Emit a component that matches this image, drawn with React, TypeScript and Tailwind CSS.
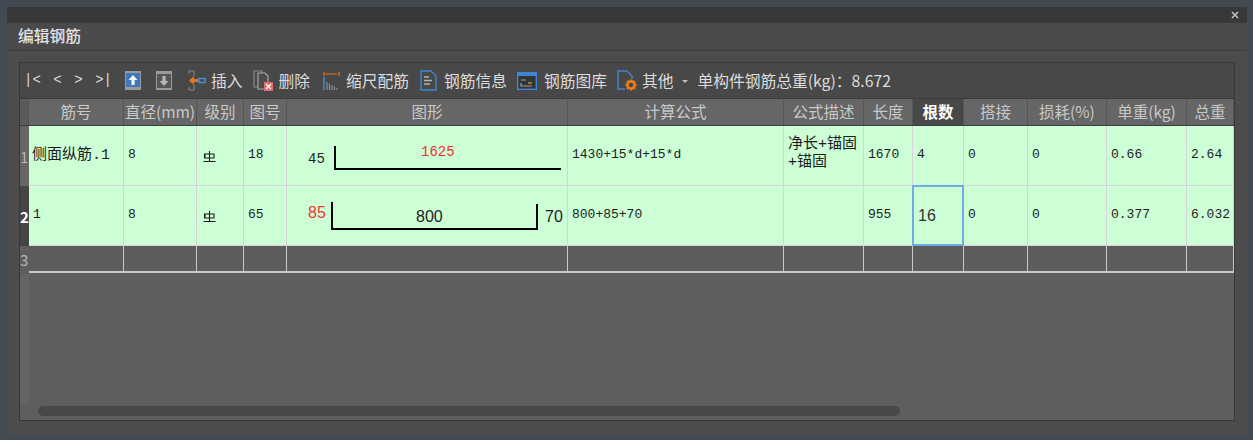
const UI_FONT = "font-['Noto_Sans_CJK_SC','Noto_Sans',sans-serif]";
const CELL_FONT = "font-['Liberation_Mono','Noto_Sans_CJK_SC',monospace]";
const LABEL_FONT = "Liberation Sans, sans-serif";

const columns = [
  { title: "筋号" },
  { title: "直径(mm)" },
  { title: "级别" },
  { title: "图号" },
  { title: "图形" },
  { title: "计算公式" },
  { title: "公式描述" },
  { title: "长度" },
  { title: "根数", active: true },
  { title: "搭接" },
  { title: "损耗(%)" },
  { title: "单重(kg)" },
  { title: "总重" },
];

const GRID =
  "grid grid-cols-[9px_95px_73px_47px_43px_281px_216px_80px_49px_51px_64px_79px_80px_47px]";

function GradeMark() {
  return (
    <svg width="13" height="12" viewBox="0 0 13 12" className="mt-[3px]">
      <path d="M2 3H11V7H2ZM1.5 2.5V7.5M6.5 0V10.5M0.5 10.5H12.5" fill="none" stroke="#1a1a1a" strokeWidth="1.1" />
    </svg>
  );
}

function UpIcon() {
  return (
    <svg width="16" height="19" viewBox="0 0 16 19">
      <rect width="16" height="19" fill="#9a9a9a" />
      <rect x="1" y="2" width="14" height="14" fill="#3f78b8" />
      <path d="M8 4L12.5 9H9.6V14H6.4V9H3.5Z" fill="#f2f6fa" />
    </svg>
  );
}

function DownIcon() {
  return (
    <svg width="16" height="19" viewBox="0 0 16 19">
      <rect width="16" height="19" fill="#9a9a9a" />
      <rect x="1" y="3" width="14" height="14" fill="#555555" />
      <path d="M8 15L3.5 10H6.4V5H9.6V10H12.5Z" fill="#b8b8b8" />
    </svg>
  );
}

function InsertIcon() {
  return (
    <svg width="18" height="21" viewBox="0 0 18 21">
      <path d="M1 1H6M1 1V4M6 6V1M1 20H6M1 20V17M6 20V15" fill="none" stroke="#8a8a8a" strokeWidth="1" />
      <path d="M6 6L1 10.5L6 15V12H10V9H6Z" fill="#e8751a" />
      <rect x="11" y="8.5" width="6" height="4" fill="none" stroke="#4a90d9" strokeWidth="1.4" />
    </svg>
  );
}

function DeleteIcon() {
  return (
    <svg width="20" height="21" viewBox="0 0 20 21">
      <path d="M1 1H9V17H1Z" fill="none" stroke="#8a8a8a" strokeWidth="1.2" />
      <path d="M5 3H12L15 6V19H5Z" fill="#4c4c4c" stroke="#a8a8a8" strokeWidth="1.2" />
      <rect x="11" y="12" width="9" height="9" fill="#e66a6a" />
      <path d="M13 14L18 19M18 14L13 19" stroke="#fff" strokeWidth="1.2" />
    </svg>
  );
}

function ScaleIcon() {
  return (
    <svg width="17" height="20" viewBox="0 0 17 20">
      <path d="M1 1V5M16 1V5M2 3H14" fill="none" stroke="#e8751a" strokeWidth="1.2" />
      <path d="M1 6V19" stroke="#4a90d9" strokeWidth="1.4" />
      <path d="M4 19V11M6.5 19V12.5M9 19V14M11.5 19V15.5M14 19V17" stroke="#8f8f8f" strokeWidth="1.2" />
    </svg>
  );
}

function InfoIcon() {
  return (
    <svg width="17" height="21" viewBox="0 0 17 21">
      <path d="M1 1H11L16 6V20H1Z" fill="none" stroke="#3f86d0" strokeWidth="1.4" />
      <path d="M4 7H9M4 10.5H12M4 14H10" stroke="#b5b5b5" strokeWidth="1.4" />
    </svg>
  );
}

function LibraryIcon() {
  return (
    <svg width="20" height="18" viewBox="0 0 20 18">
      <rect x="0.7" y="0.7" width="18.6" height="16.6" fill="#333" stroke="#3f86d0" strokeWidth="1.4" />
      <rect x="1" y="1" width="18" height="3" fill="#3f86d0" />
      <path d="M4 8H9M4 11V14H15" fill="none" stroke="#a0a0a0" strokeWidth="1.2" />
      <path d="M11 11H15" stroke="#d8a13a" strokeWidth="1.2" />
    </svg>
  );
}

function OtherIcon() {
  return (
    <svg width="20" height="21" viewBox="0 0 20 21">
      <path d="M8 19H1V1H10L15 6V9" fill="none" stroke="#3f86d0" strokeWidth="1.4" />
      <circle cx="14" cy="15" r="3.6" fill="none" stroke="#ee7a1c" strokeWidth="2.6" />
      <path d="M14 9.5V11M14 19V20.5M8.5 15H10M18 15H19.5M10 11L11 12M17 18L18 19M18 11L17 12M11 18L10 19" stroke="#ee7a1c" strokeWidth="1.8" />
    </svg>
  );
}

function ToolItem({ icon, label, className }: { icon: React.ReactNode; label: string; className: string }) {
  return (
    <div className={`flex items-center ${className}`}>
      {icon}
      <span>{label}</span>
    </div>
  );
}

function Cell({ children, className = "pb-[2px] pl-1 text-[13px]" }: { children?: React.ReactNode; className?: string }) {
  return (
    <div className={`flex items-center border-r border-b border-[#d8d3d8] text-[#1c1c1c] ${className}`}>
      {children}
    </div>
  );
}

function RowHead({ n, className }: { n: number; className: string }) {
  return <div className={`flex items-center text-[15px] leading-none ${UI_FONT} ${className}`}>{n}</div>;
}

export default function App() {
  const emptyCells = Array.from({ length: 13 });

  return (
    <div className="h-[440px] w-[1253px] overflow-hidden bg-[#434a54] pt-[7px] pl-[7px]">
      <div className={`h-[427px] w-[1240px] bg-[#4c4c4c] ${UI_FONT}`}>
        <div className="flex h-[15px] items-center justify-end bg-[#383838] pr-[8px]">
          <svg width="8" height="8" viewBox="0 0 8 8">
            <path d="M1 1L7 7M7 1L1 7" stroke="#c4c4c4" strokeWidth="1.5" />
          </svg>
        </div>
        <div className="flex h-[29px] items-center border-y border-[#3a3a3a] bg-[#4a4a4a] pb-[2px] pl-[11px] text-[15.75px] font-medium text-[#e2e2e2]">
          编辑钢筋
        </div>

        <div className="mt-[11px] ml-[12px] w-[1216px] border border-[#383838] bg-[#5e5e5e]">
          <div className="flex h-[36px] items-center border-b border-[#3a3a3a] bg-[#484848] pl-[4px] text-[15.75px] whitespace-nowrap text-[#dcdcdc]">
            <div className={`flex w-[88px] justify-between text-[14px] ${CELL_FONT}`}>
              <span>|&lt;</span>
              <span>&lt;</span>
              <span>&gt;</span>
              <span>&gt;|</span>
            </div>
            <div className="ml-[13px]"><UpIcon /></div>
            <div className="ml-[15px]"><DownIcon /></div>
            <ToolItem icon={<InsertIcon />} label="插入" className="ml-[16px] gap-[5px]" />
            <ToolItem icon={<DeleteIcon />} label="删除" className="ml-[10px] gap-[6px]" />
            <ToolItem icon={<ScaleIcon />} label="缩尺配筋" className="ml-[13px] gap-[6px]" />
            <ToolItem icon={<InfoIcon />} label="钢筋信息" className="ml-[11px] gap-[7px]" />
            <ToolItem icon={<LibraryIcon />} label="钢筋图库" className="ml-[10px] gap-[7px]" />
            <ToolItem icon={<OtherIcon />} label="其他" className="ml-[10px] gap-[5px]" />
            <span className="mt-[1px] ml-[8px] h-0 w-0 border-x-[3px] border-t-[3px] border-x-transparent border-t-[#bdbdbd]" />
            <span className="ml-[10px]">单构件钢筋总重(kg)：8.672</span>
          </div>

          <div className="relative h-[321px] overflow-hidden">
            <div className={`${GRID} h-[27px] border-b border-[#3c3c3c] bg-[#666666] text-[15.5px] whitespace-nowrap text-[#c9c9c9]`}>
              <div className="border-r border-[#555555] bg-[#5a5a5a]" />
              {columns.map((col) => (
                <div
                  key={col.title}
                  className={`flex items-center justify-center overflow-hidden border-r border-[#555555] ${
                    col.active ? "bg-[#484848] font-bold text-white" : ""
                  }`}
                >
                  {col.title}
                </div>
              ))}
            </div>

            <div className={`${GRID} h-[60px] bg-[#ccffd5] ${CELL_FONT}`}>
              <RowHead n={1} className="bg-[#666666] text-[#b5b5b5]" />
              <Cell className="pt-[2px] pl-[3px] text-[15px]">侧面纵筋.1</Cell>
              <Cell>8</Cell>
              <Cell className="pl-[6px]"><GradeMark /></Cell>
              <Cell>18</Cell>
              <Cell className="pl-0">
                <svg width="280" height="59" viewBox="1 0 280 59" className="block">
                  <path d="M49 20V43H275" fill="none" stroke="#000" strokeWidth="2" />
                  <text x="22" y="37" fontSize="14" fill="#222">45</text>
                  <text x="135" y="30" fontSize="14" fill="#f53030">1625</text>
                </svg>
              </Cell>
              <Cell>1430+15*d+15*d</Cell>
              <Cell className="pb-[4px] pl-1 text-[15px] leading-[18px] break-all">净长+锚固 +锚固</Cell>
              <Cell>1670</Cell>
              <Cell>4</Cell>
              <Cell>0</Cell>
              <Cell>0</Cell>
              <Cell>0.66</Cell>
              <Cell>2.64</Cell>
            </div>

            <div className={`${GRID} h-[60px] bg-[#ccffd5] ${CELL_FONT}`}>
              <RowHead n={2} className="bg-[#454545] font-bold text-white" />
              <Cell>1</Cell>
              <Cell>8</Cell>
              <Cell className="pl-[6px]"><GradeMark /></Cell>
              <Cell>65</Cell>
              <Cell className="pl-0">
                <svg width="280" height="59" viewBox="1 0 280 59" className="block">
                  <path d="M46 16V43H251V18" fill="none" stroke="#000" strokeWidth="2" />
                  <text x="22" y="32" fontSize="16" fill="#f53030" fontFamily={LABEL_FONT}>85</text>
                  <text x="130" y="36" fontSize="16" fill="#222" fontFamily={LABEL_FONT}>800</text>
                  <text x="259" y="36" fontSize="16" fill="#222" fontFamily={LABEL_FONT}>70</text>
                </svg>
              </Cell>
              <Cell>800+85+70</Cell>
              <Cell />
              <Cell>955</Cell>
              <div className="-mt-px -ml-px flex items-center border-2 border-[#6fa9e6] pt-[1px] pl-[4px] font-['Liberation_Sans',sans-serif] text-[16px] text-[#333333]">
                16
              </div>
              <Cell>0</Cell>
              <Cell>0</Cell>
              <Cell>0.377</Cell>
              <Cell>6.032</Cell>
            </div>

            <div className={`${GRID} h-[27px] bg-[#5c5c5c]`}>
              <RowHead n={3} className="bg-[#5e5e5e] text-[#b5b5b5]" />
              {emptyCells.map((_, i) => (
                <div key={i} className="border-r border-b-2 border-[#c9c9c9]" />
              ))}
            </div>

            <div className="mt-[1px] h-[129px] w-[9px] bg-[#646464]" />
            <div className="absolute top-[307px] left-[18px] h-[10px] w-[862px] rounded-full bg-[#484848]" />
          </div>
        </div>
      </div>
    </div>
  );
}
